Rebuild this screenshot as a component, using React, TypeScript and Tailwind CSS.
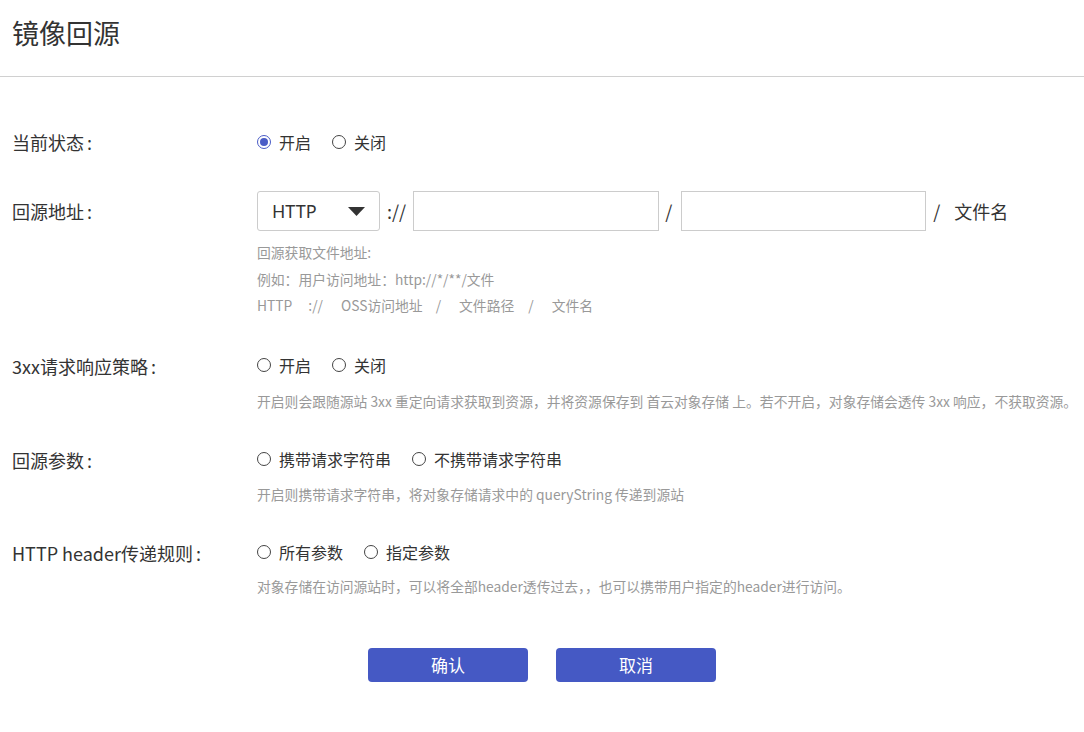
import React from "react";

const font = { fontFamily: '"Noto Sans CJK SC", "Noto Sans", sans-serif' };

function Radio({ label, checked = false }: { label: string; checked?: boolean }) {
  return (
    <span className="flex items-center gap-[8px] text-[16px] text-[#333] leading-[20px]">
      {checked ? (
        <span className="w-[14px] h-[14px] rounded-full border border-[#4a5cc6] flex items-center justify-center">
          <span className="w-[8px] h-[8px] rounded-full bg-[#4a5cc6]" />
        </span>
      ) : (
        <span className="w-[14px] h-[14px] rounded-full border border-[#444]" />
      )}
      {label}
    </span>
  );
}

function Label({ children, className = "" }: { children: React.ReactNode; className?: string }) {
  return (
    <div className={"w-[245px] shrink-0 text-[18px] text-[#333] leading-[20px] " + className}>
      {children}
      <span className="ml-[3px]">:</span>
    </div>
  );
}

export default function App() {
  return (
    <div className="w-[1084px] h-[732px] bg-white" style={font}>
      <div className="h-[77px] border-b border-[#d0d0d0] pl-3 flex items-center">
        <h1 className="text-[27px] text-[#333] leading-none -mt-[12px]">镜像回源</h1>
      </div>
      <div className="pl-3">
        <div className="flex items-center mt-[55px]">
          <Label>当前状态</Label>
          <div className="flex gap-[21px]">
            <Radio label="开启" checked />
            <Radio label="关闭" />
          </div>
        </div>

        <div className="flex items-start mt-[39px]">
          <Label className="mt-[10px]">回源地址</Label>
          <div className="flex flex-col">
            <div className="flex items-center h-[40px]">
              <div className="w-[123px] h-[40px] border border-[#ccc] rounded-[3px] flex items-center justify-between pl-[14px] pr-[14px]">
                <span className="text-[18px] text-[#333]" style={{ fontFamily: '"Noto Sans", sans-serif' }}>HTTP</span>
                <svg width="17" height="9" viewBox="0 0 17 9"><path d="M0 0 L17 0 L8.5 9 Z" fill="#333" /></svg>
              </div>
              <span className="text-[18px] text-[#333] ml-[7px] mr-[7px]">://</span>
              <div className="w-[246px] h-[40px] border border-[#ccc]" />
              <span className="text-[18px] text-[#333] ml-[6px] mr-[9px]">/</span>
              <div className="w-[245px] h-[40px] border border-[#ccc]" />
              <span className="text-[18px] text-[#333] ml-[7px]">/</span>
              <span className="text-[18px] text-[#333] ml-[14px]">文件名</span>
            </div>
            <div className="mt-[8px] text-[13.8px] text-[#999] leading-[26.5px]">
              <div>回源获取文件地址:</div>
              <div>例如：用户访问地址：http://*/**/文件</div>
              <div className="flex">
                <span>HTTP</span>
                <span className="ml-[16px]">://</span>
                <span className="ml-[18px]">OSS访问地址</span>
                <span className="ml-[13px]">/</span>
                <span className="ml-[18px]">文件路径</span>
                <span className="ml-[14px]">/</span>
                <span className="ml-[18px]">文件名</span>
              </div>
            </div>
          </div>
        </div>

        <div className="flex items-start mt-[36px]">
          <Label className="mt-[1px]">3xx请求响应策略</Label>
          <div className="flex flex-col">
            <div className="flex gap-[21px]">
              <Radio label="开启" />
              <Radio label="关闭" />
            </div>
            <div className="mt-[13px] text-[13.8px] text-[#999] leading-[26px] whitespace-nowrap">
              开启则会跟随源站 3xx 重定向请求获取到资源，并将资源保存到 首云对象存储 上。若不开启，对象存储会透传 3xx 响应，不获取资源。
            </div>
          </div>
        </div>

        <div className="flex items-start mt-[35px]">
          <Label className="mt-[1px]">回源参数</Label>
          <div className="flex flex-col">
            <div className="flex gap-[21px]">
              <Radio label="携带请求字符串" />
              <Radio label="不携带请求字符串" />
            </div>
            <div className="mt-[12px] text-[13.8px] text-[#999] leading-[26px]">
              开启则携带请求字符串，将对象存储请求中的 queryString 传递到源站
            </div>
          </div>
        </div>

        <div className="flex items-start mt-[35px]">
          <Label className="mt-[1px]">HTTP header传递规则</Label>
          <div className="flex flex-col">
            <div className="flex gap-[21px]">
              <Radio label="所有参数" />
              <Radio label="指定参数" />
            </div>
            <div className="mt-[11px] text-[13.8px] text-[#999] leading-[26px]">
              对象存储在访问源站时，可以将全部header透传过去，，也可以携带用户指定的header进行访问。
            </div>
          </div>
        </div>
      </div>

      <div className="flex justify-center gap-[28px] mt-[49px]">
        <button className="w-[160px] h-[34px] rounded-[4px] bg-[#4559c4] text-white text-[17px]">确认</button>
        <button className="w-[160px] h-[34px] rounded-[4px] bg-[#4559c4] text-white text-[17px]">取消</button>
      </div>
    </div>
  );
}
